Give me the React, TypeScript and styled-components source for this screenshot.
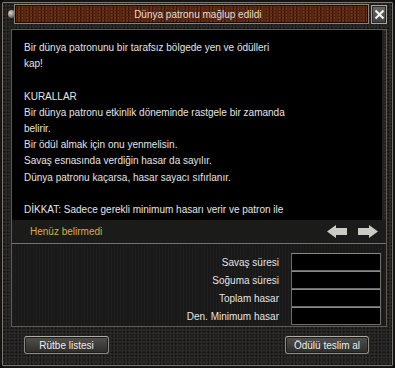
import styled, { createGlobalStyle } from 'styled-components';

const GlobalStyle = createGlobalStyle`
	html, body {
		margin: 0;
		padding: 0;
		background: #0c0c0c;
	}
	* {
		box-sizing: border-box;
	}
`;

const infoLines = [
	'Bir dünya patronunu bir tarafsız bölgede yen ve ödülleri',
	'kap!',
	'',
	'KURALLAR',
	'Bir dünya patronu etkinlik döneminde rastgele bir zamanda',
	'belirir.',
	'Bir ödül almak için onu yenmelisin.',
	'Savaş esnasında verdiğin hasar da sayılır.',
	'Dünya patronu kaçarsa, hasar sayacı sıfırlanır.',
	'',
	'DİKKAT: Sadece gerekli minimum hasarı verir ve patron ile',
];

const stats = ['Savaş süresi', 'Soğuma süresi', 'Toplam hasar', 'Den. Minimum hasar'];

const ArrowIcon = ({ flip = false }: { flip?: boolean }) => (
	<svg width="20" height="13" viewBox="0 0 20 13" style={{ transform: flip ? 'scaleX(-1)' : undefined }}>
		<path d="M0 6.5 L9 0 L9 3 L20 3 L20 10 L9 10 L9 13 Z" fill="#cbcbc5" />
	</svg>
);

const App = () => (
	<>
		<GlobalStyle />
		<Window>
			<TitleRow>
				<Rivet />
				<TitleBar>Dünya patronu mağlup edildi</TitleBar>
				<CloseButton>
					<svg width="11" height="11" viewBox="0 0 11 11">
						<path d="M1.5 1.5 L9.5 9.5 M9.5 1.5 L1.5 9.5" stroke="#f2f2f2" strokeWidth="2.2" />
					</svg>
				</CloseButton>
			</TitleRow>
			<Body>
				<TextArea>
					{infoLines.map((line, i) => (
						<Line key={i}>{line || '\u00a0'}</Line>
					))}
				</TextArea>
				<StatusStrip>
					<Status>Henüz belirmedi</Status>
					<Arrows>
						<ArrowIcon />
						<ArrowIcon flip />
					</Arrows>
				</StatusStrip>
				<StatsPanel>
					{stats.map((label) => (
						<StatRow key={label}>
							<StatLabel>{label}</StatLabel>
							<StatValue />
						</StatRow>
					))}
				</StatsPanel>
			</Body>
			<Footer>
				<Button $width={85}>Rütbe listesi</Button>
				<Button $width={84}>Ödülü teslim al</Button>
			</Footer>
		</Window>
	</>
);

const stone = `
	radial-gradient(circle at 1px 1px, rgba(255, 255, 255, 0.05) 0.8px, transparent 1.3px) 0 0 / 3px 3px,
	radial-gradient(circle at 2px 2px, rgba(0, 0, 0, 0.35) 0.8px, transparent 1.3px) 0 0 / 4px 4px,
	#222120
`;

const Window = styled.div`
	position: relative;
	width: 395px;
	height: 368px;
	padding: 4px 6px 0 8px;
	background: ${stone};
	border: 2px solid #141414;
	box-shadow: inset 0 0 0 1px #7c786f;
	clip-path: polygon(5px 0, calc(100% - 5px) 0, 100% 5px, 100% calc(100% - 5px), calc(100% - 5px) 100%, 5px 100%, 0 calc(100% - 5px), 0 5px);
	font-family: 'Liberation Sans', Arial, sans-serif;
	font-size: 10px;
	color: #e4e4e4;
`;

const TitleRow = styled.div`
	display: flex;
	align-items: center;
	height: 20px;
	margin-top: -2px;
`;

const Rivet = styled.div`
	width: 8px;
	height: 8px;
	margin-left: -2px;
	margin-right: -1px;
	border-radius: 50%;
	background: radial-gradient(circle at 35% 35%, #d8d6d0, #7a7770 60%, #3a3835);
	z-index: 1;
`;

const TitleBar = styled.div`
	flex: 0 0 355px;
	height: 20px;
	padding-left: 12px;
	display: flex;
	align-items: center;
	justify-content: center;
	border: 1px solid #8a857b;
	box-shadow: inset 0 0 0 1px #1d0c05;
	background:
		radial-gradient(circle at 1px 1px, rgba(170, 80, 35, 0.35) 0.7px, transparent 1.2px) 0 0 / 3px 3px,
		radial-gradient(circle at 2px 1px, rgba(20, 5, 0, 0.5) 0.7px, transparent 1.3px) 0 0 / 4px 3px,
		#52230f;
	color: #e2dcd6;
	font-size: 10px;
`;

const CloseButton = styled.div`
	width: 17px;
	height: 19px;
	margin-left: 2px;
	display: flex;
	align-items: center;
	justify-content: center;
	border: 1px solid #a8a59e;
	box-shadow: inset 0 0 0 1px #2a2a28;
	background: linear-gradient(#6a6a66, #404040);
`;

const Body = styled.div`
	width: 376px;
	margin-top: 5px;
	margin-left: 1px;
	border: 1px solid #5f5b54;
	background: ${stone};
`;

const TextArea = styled.div`
	width: 370px;
	height: 190px;
	padding: 10px 0 0 12px;
	background: #000;
	overflow: hidden;
`;

const Line = styled.div`
	height: 16.2px;
	line-height: 16.2px;
	white-space: nowrap;
`;

const StatusStrip = styled.div`
	display: flex;
	align-items: center;
	justify-content: space-between;
	height: 23px;
	padding: 0 8px 0 18px;
	background: #1b1b1a;
`;

const Status = styled.span`
	color: #dbac3c;
`;

const Arrows = styled.div`
	display: flex;
	gap: 11px;
	margin-top: -1px;
`;

const StatsPanel = styled.div`
	height: 83px;
	padding: 9px 5px 0 0;
	border-top: 1px solid #77736b;
	display: flex;
	flex-direction: column;
	align-items: flex-end;
	background:
		repeating-linear-gradient(90deg, rgba(255, 255, 255, 0.025) 0 1px, transparent 1px 3px),
		#191919;
`;

const StatRow = styled.div`
	display: flex;
	align-items: center;
	gap: 12px;
	height: 18px;
`;

const StatLabel = styled.span`
	color: #e4e4e4;
`;

const StatValue = styled.div`
	width: 90px;
	height: 18px;
	background: #000;
	border: 1px solid #6d6c67;
	border-top-color: #8a8983;
`;

const Footer = styled.div`
	display: flex;
	justify-content: space-between;
	padding: 9px 18px 0 14px;
`;

const Button = styled.div<{ $width: number }>`
	width: ${(p) => p.$width}px;
	height: 18px;
	display: flex;
	align-items: center;
	justify-content: center;
	border: 1px solid #8d8a84;
	border-top-color: #b1aea8;
	border-radius: 3px;
	background: linear-gradient(#52514e, #2c2b29);
	box-shadow: inset 0 0 0 1px #1c1c1b;
	color: #ececec;
	font-size: 10px;
`;

export default App;
